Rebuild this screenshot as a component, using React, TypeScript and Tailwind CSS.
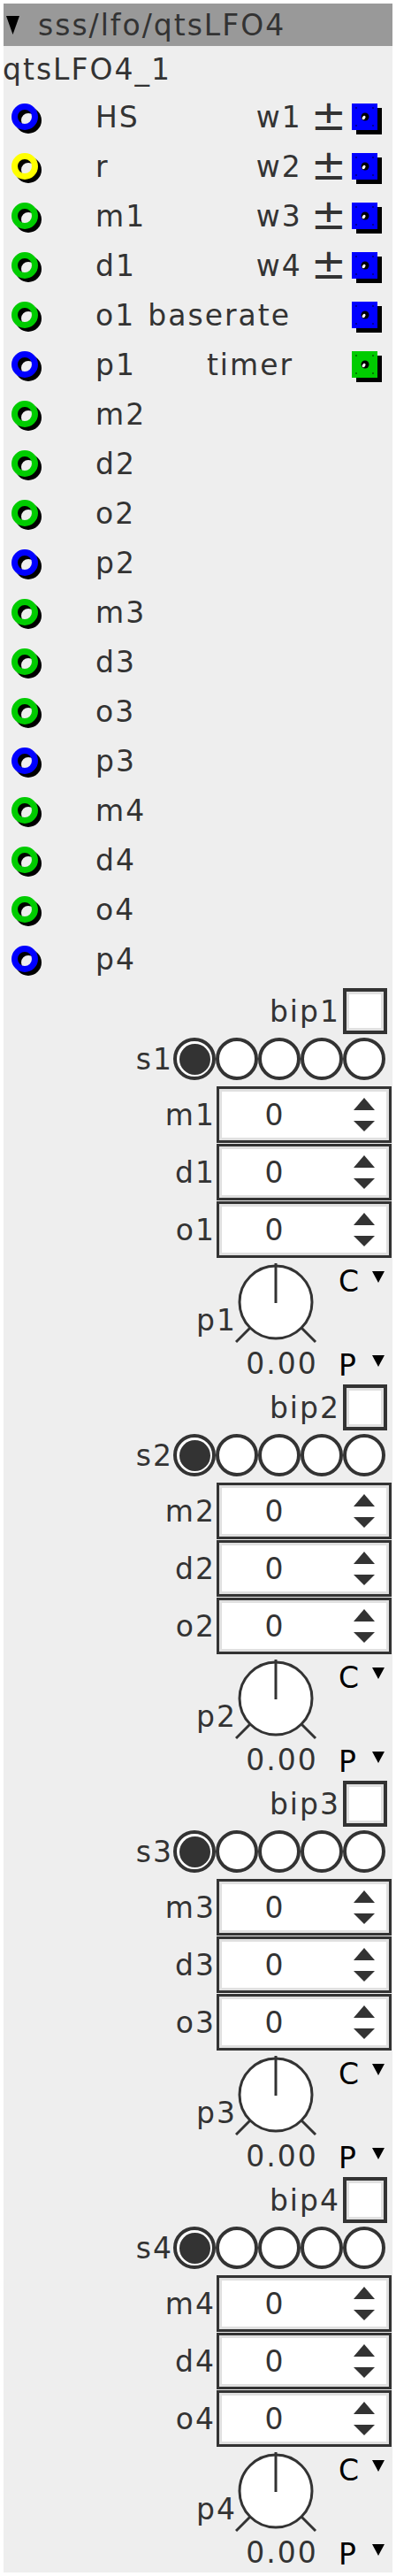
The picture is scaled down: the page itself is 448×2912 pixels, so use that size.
import React from "react";

const BLUE = "#0000ff";
const YELLOW = "#ffff00";
const GREEN = "#00cc00";

const Ring = ({ color }: { color: string }) => (
  <svg width="36" height="36" viewBox="0 0 36 36" className="ml-[9px] mt-[6px] shrink-0">
    <circle cx="19" cy="19" r="11.5" fill="none" stroke="#000" strokeWidth="7" />
    <circle cx="15" cy="15" r="11.5" fill="none" stroke={color} strokeWidth="7" />
  </svg>
);

const Outlet = ({ color, className = "" }: { color: string; className?: string }) => (
  <svg width="34" height="35" viewBox="0 0 34 35" className={"mt-[5px] shrink-0 " + className}>
    <rect x="5" y="5" width="29" height="30" fill="#000" />
    <rect x="0" y="0" width="29" height="30" fill={color} />
    <circle cx="5" cy="5" r="0.9" fill="#000" opacity="0.6" />
    <circle cx="24" cy="5" r="0.9" fill="#000" opacity="0.6" />
    <circle cx="5" cy="25" r="0.9" fill="#000" opacity="0.6" />
    <circle cx="24" cy="25" r="0.9" fill="#000" opacity="0.6" />
    <circle cx="15" cy="15" r="4.5" fill="#000" />
    <ellipse cx="13.6" cy="16" rx="1.6" ry="2.4" fill="#fff" transform="rotate(35 13.6 16)" />
  </svg>
);

type Inlet = { label: string; color: string; right?: React.ReactNode };

const wOut = (label: string) => (
  <div className="flex items-center pr-[12px]">
    <span className="mr-[10px] leading-[33px]">{label}</span>
    <span className="mb-[5px] text-[48px] leading-[48px] tracking-normal">±</span>
    <Outlet color={BLUE} className="ml-[6px]" />
  </div>
);

const inlets: Inlet[] = [
  { label: "HS", color: BLUE, right: wOut("w1") },
  { label: "r", color: YELLOW, right: wOut("w2") },
  { label: "m1", color: GREEN, right: wOut("w3") },
  { label: "d1", color: GREEN, right: wOut("w4") },
  {
    label: "o1",
    color: GREEN,
    right: (
      <div className="flex items-center pr-[12px]">
        <span className="mr-[69px] leading-[33px]">baserate</span>
        <Outlet color={BLUE} />
      </div>
    ),
  },
  {
    label: "p1",
    color: BLUE,
    right: (
      <div className="flex items-center pr-[12px]">
        <span className="mr-[66px] leading-[33px]">timer</span>
        <Outlet color={GREEN} />
      </div>
    ),
  },
  { label: "m2", color: GREEN },
  { label: "d2", color: GREEN },
  { label: "o2", color: GREEN },
  { label: "p2", color: BLUE },
  { label: "m3", color: GREEN },
  { label: "d3", color: GREEN },
  { label: "o3", color: GREEN },
  { label: "p3", color: BLUE },
  { label: "m4", color: GREEN },
  { label: "d4", color: GREEN },
  { label: "o4", color: GREEN },
  { label: "p4", color: BLUE },
];

const Caret = () => (
  <svg width="14" height="13" viewBox="0 0 14 13" className="ml-[13px] mt-[5px] shrink-0">
    <polygon points="0,0 14,0 7,13" fill="#000" />
  </svg>
);

const NumRow = ({ label }: { label: string }) => (
  <div className="flex h-[64px] items-center justify-end pr-px">
    <span className="mr-px leading-[33px]">{label}</span>
    <div className="h-[64px] w-[198px] border-[3px] border-[#333] bg-white">
      <div className="flex h-full w-full items-center border-[3px] border-[#e0e0e0]">
        <span className="w-[120px] text-center leading-[33px]">0</span>
        <svg width="24" height="38" viewBox="0 0 24 38" className="ml-[29px] shrink-0">
          <polygon points="12,0 24,14 0,14" fill="#333" />
          <polygon points="0,26 24,26 12,38" fill="#333" />
        </svg>
      </div>
    </div>
  </div>
);

const Section = ({ n }: { n: number }) => (
  <div className="flex flex-col">
    <div className="mt-[5px] flex h-[52px] items-center justify-end pr-[6px]">
      <span className="mr-[3px] leading-[33px]">bip{n}</span>
      <div className="h-[52px] w-[50px] border-[4px] border-[#333] bg-white">
        <div className="h-full w-full border-[3px] border-[#e0e0e0]" />
      </div>
    </div>
    <div className="mt-[3px] flex h-[50px] items-center justify-end pr-[8px]">
      <span className="leading-[33px]">s{n}</span>
      {[0, 1, 2, 3, 4].map((i) => (
        <div
          key={i}
          className="flex h-[48px] w-[48px] items-center justify-center rounded-full border-[4px] border-[#333] bg-white"
        >
          {i === 0 && <div className="h-[35px] w-[35px] rounded-full bg-[#333]" />}
        </div>
      ))}
    </div>
    <div className="mt-[6px] flex flex-col gap-px">
      <NumRow label={"m" + n} />
      <NumRow label={"d" + n} />
      <NumRow label={"o" + n} />
    </div>
    <div className="flex h-[138px] justify-end pr-[9px]">
      <span className="-mr-[2px] mt-[54px] self-start leading-[33px]">p{n}</span>
      <div className="flex w-[94px] flex-col">
        <svg width="94" height="96" viewBox="0 0 94 96" className="mt-[2px]">
          <circle cx="46" cy="48" r="41" fill="#fff" stroke="#333" strokeWidth="3" />
          <line x1="46" y1="4" x2="46" y2="49" stroke="#333" strokeWidth="3" />
          <line x1="17" y1="77" x2="1" y2="93" stroke="#333" strokeWidth="3" />
          <line x1="75" y1="77" x2="91" y2="93" stroke="#333" strokeWidth="3" />
        </svg>
        <span className="mt-[5px] whitespace-nowrap pl-[12px] text-center leading-[33px]">0.00</span>
      </div>
      <div className="ml-[23px] flex flex-col text-black">
        <div className="mt-[10px] flex h-[33px] items-start leading-[33px]">
          <span className="w-[25px]">C</span>
          <Caret />
        </div>
        <div className="mt-[62px] flex h-[33px] items-start leading-[33px]">
          <span className="w-[25px]">P</span>
          <Caret />
        </div>
      </div>
    </div>
  </div>
);

export default function App() {
  return (
    <div className="bg-white p-1 font-['DejaVu_Sans',sans-serif] text-[33px] tracking-[2px] text-[#333]">
      <div className="bg-[#eeeeee] pb-1">
        <div className="flex h-[48px] items-center bg-[#999999]">
          <svg width="15" height="21" viewBox="0 0 15 21" className="ml-[3px] shrink-0">
            <polygon points="0,0 15,0 7.5,21" fill="#000" />
          </svg>
          <span className="ml-[21px] leading-[33px]">sss/lfo/qtsLFO4</span>
        </div>
        <div className="-ml-px flex h-[52px] items-center leading-[33px]">qtsLFO4_1</div>
        {inlets.map((r) => (
          <div key={r.label} className="flex h-[56px] items-center">
            <Ring color={r.color} />
            <span className="ml-[59px] leading-[33px]">{r.label}</span>
            <div className="flex-1" />
            {r.right}
          </div>
        ))}
        {[1, 2, 3, 4].map((n) => (
          <Section key={n} n={n} />
        ))}
      </div>
    </div>
  );
}
